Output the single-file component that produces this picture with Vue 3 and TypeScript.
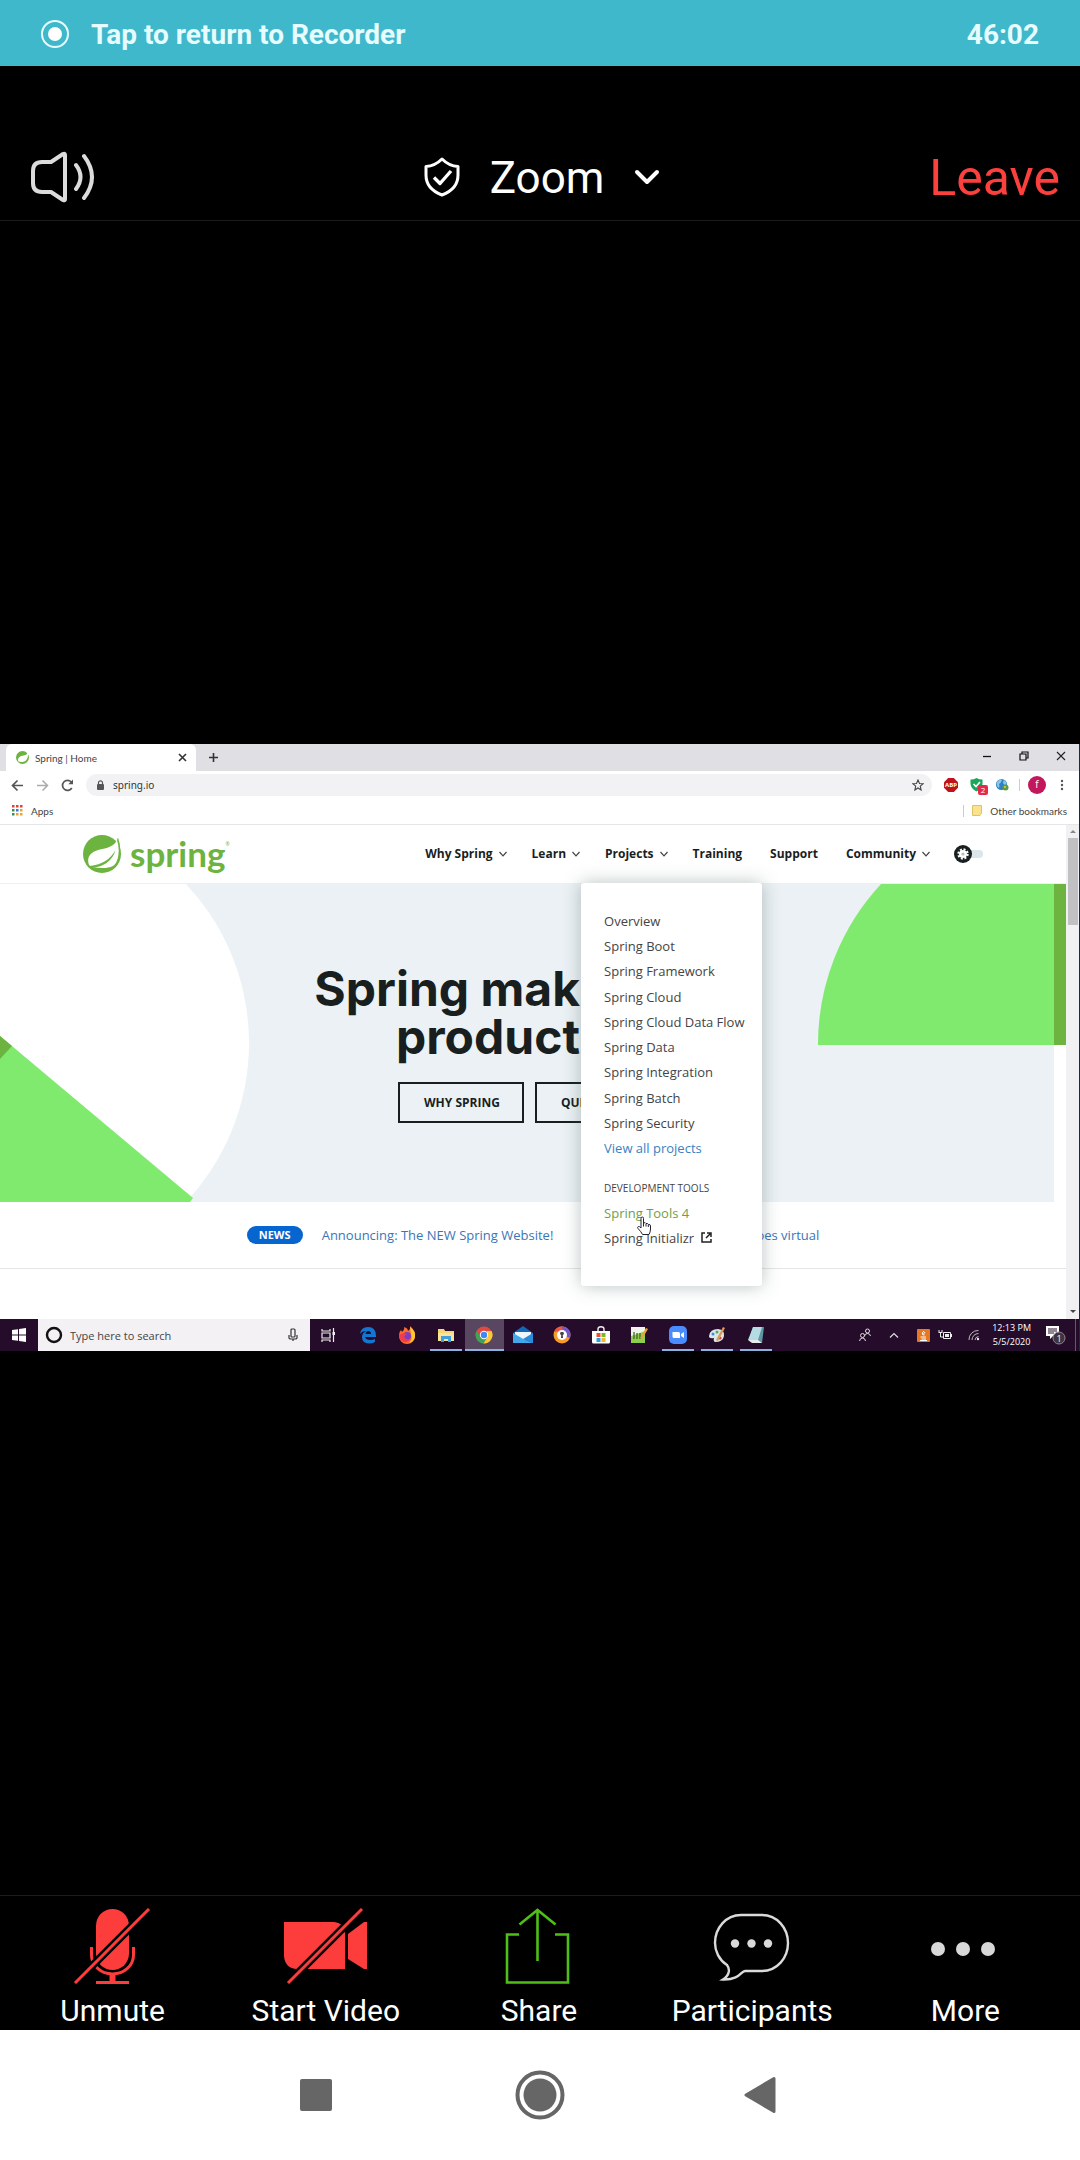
<script setup lang="ts">
import { ref } from 'vue'

interface NavItem {
  label: string
  caret: boolean
  menu?: boolean
}

const navItems: NavItem[] = [
  { label: 'Why Spring', caret: true },
  { label: 'Learn', caret: true },
  { label: 'Projects', caret: true, menu: true },
  { label: 'Training', caret: false },
  { label: 'Support', caret: false },
  { label: 'Community', caret: true },
]

const projects: string[] = [
  'Overview',
  'Spring Boot',
  'Spring Framework',
  'Spring Cloud',
  'Spring Cloud Data Flow',
  'Spring Data',
  'Spring Integration',
  'Spring Batch',
  'Spring Security',
  'View all projects',
]

const address = ref('spring.io')
const appColors = ['#d9473a', '#d9473a', '#d9473a', '#3f8f54', '#3b78d8', '#e8a33a', '#3f8f54', '#e8a33a', '#e8a33a']
</script>

<template>
  <div class="phone">
    <button class="recorder" type="button">
      <svg class="rec-icon" viewBox="0 0 28 28"><circle cx="14" cy="14" r="13" fill="none" stroke="#e6fcff" stroke-width="2" /><circle cx="14" cy="14" r="7" fill="#fff" /></svg>
      <span>Tap to return to Recorder</span>
      <span class="rec-time">46:02</span>
    </button>

    <header class="meeting-head">
      <button type="button" class="plain speaker" aria-label="Speaker">
        <svg width="66" height="52" viewBox="0 0 66 52" fill="none" stroke="#dcdcdc" stroke-width="4" stroke-linecap="round" stroke-linejoin="round">
          <path d="M3 20Q3 11 12 11H21L33 3Q35 2 35 4V48Q35 50 33 49L21 41H12Q3 41 3 32Z" />
          <path d="M46 14Q55 26 46 38M54 5Q70 26 54 47" />
        </svg>
      </button>
      <button type="button" class="plain title">
        <svg width="36" height="40" viewBox="0 0 36 40" fill="none" stroke="#fff" stroke-width="3" stroke-linejoin="round"><path d="M18 2Q25 9 34 9.500V18Q34 32 18 38Q2 32 2 18V9.500Q11 9 18 2Z" /><path d="M10 20.500L16 26.500L27 14" stroke-width="3.400" /></svg>
        <span>Zoom</span>
        <svg width="26" height="16" viewBox="0 0 26 16" fill="none" stroke="#fff" stroke-width="4" stroke-linecap="round" stroke-linejoin="round"><path d="M3 3L13 13L23 3" /></svg>
      </button>
      <button type="button" class="plain leave">Leave</button>
    </header>

    <main class="stage">
      <section class="share">
        <div class="tabstrip">
          <div class="tab">
            <svg width="13" height="13" viewBox="0 0 38 38"><circle cx="19" cy="19" r="19" fill="#6db33f" /><path d="M35 3C33 10 28 13 19 14C8 16 4 23 7 31C20 35 38 32 35 3Z" fill="#fff" /></svg>
            <span>Spring | Home</span>
            <svg class="tab-x" width="9" height="9" viewBox="0 0 9 9" stroke="#333" stroke-width="1.600"><path d="M1 1L8 8M8 1L1 8" /></svg>
          </div>
          <svg class="newtab" width="11" height="11" viewBox="0 0 11 11" stroke="#333" stroke-width="1.600"><path d="M5.500 1V10M1 5.500H10" /></svg>
          <div class="wincontrols">
            <svg width="10" height="10" viewBox="0 0 10 10" stroke="#111" stroke-width="1.300"><path d="M1 5.500H9" /></svg>
            <svg width="10" height="10" viewBox="0 0 10 10" fill="none" stroke="#111" stroke-width="1.200"><path d="M1 3H7V9H1ZM3 3V1H9V7H7" /></svg>
            <svg width="10" height="10" viewBox="0 0 10 10" stroke="#222" stroke-width="1.100"><path d="M1 1L9 9M9 1L1 9" /></svg>
          </div>
        </div>

        <div class="toolbar">
          <svg width="13" height="13" viewBox="0 0 13 13" fill="none" stroke="#555" stroke-width="1.700"><path d="M12 6.500H2M6.500 1.500L1.500 6.500L6.500 11.500" /></svg>
          <svg width="13" height="13" viewBox="0 0 13 13" fill="none" stroke="#aaa" stroke-width="1.500"><path d="M1 6.500H11M6.500 1.500L11.500 6.500L6.500 11.500" /></svg>
          <svg width="13" height="13" viewBox="0 0 13 13" fill="none" stroke="#555" stroke-width="1.700"><path d="M10.800 9A5 5 0 1 1 10.200 3L11 4" /><path d="M12 .500V5.300H7.300Z" fill="#555" stroke="none" /></svg>
          <label class="omnibox">
            <svg width="9" height="10" viewBox="0 0 9 10"><rect x="1" y="4" width="7" height="6" rx="1" fill="#555" /><path d="M2.500 4V2.800A2 2 0 0 1 6.500 2.800V4" fill="none" stroke="#555" stroke-width="1.200" /></svg>
            <input v-model="address" type="text" aria-label="Address" />
            <svg width="12" height="12" viewBox="0 0 12 12" fill="none" stroke="#444" stroke-width="1.100"><path d="M6 1L7.500 4.500L11 4.800L8.300 7.200L9.100 11L6 9L2.900 11L3.700 7.200L1 4.800L4.500 4.500Z" /></svg>
          </label>
          <div class="extensions">
            <span class="abp">ABP</span>
            <span class="guard">
              <svg width="13" height="14" viewBox="0 0 13 14"><path d="M6.500 0Q9 1.500 12.500 1.500V6Q12 11 6.500 13.500Q1 11 .500 6V1.500Q4 1.500 6.500 0Z" fill="#1ba75a" /><path d="M3.500 6L6 8.500L10 4" fill="none" stroke="#fff" stroke-width="1.600" /></svg>
              <i>2</i>
            </span>
            <svg width="14" height="14" viewBox="0 0 14 14"><circle cx="6.500" cy="6.500" r="5.500" fill="#2c82c4" /><path d="M2 4Q5 0 7 2Q6 5 4 6Q5 8 4 10Q1 8 2 4ZM9 2Q12 4 11 7Q8 7 8 4Z" fill="#8bc6e8" /><circle cx="10.500" cy="9.500" r="3" fill="#5d9c3c" /><circle cx="10" cy="9" r="1" fill="#f1c946" /></svg>
            <span class="vline"></span>
            <span class="avatar">f</span>
            <svg width="4" height="14" viewBox="0 0 4 14" fill="#555"><circle cx="2" cy="3" r="1.200" /><circle cx="2" cy="7" r="1.200" /><circle cx="2" cy="11" r="1.200" /></svg>
          </div>
        </div>

        <div class="bookmarks">
          <svg width="11" height="11" viewBox="0 0 11 11"><rect v-for="(c, i) in appColors" :key="i" :x="(i % 3) * 4" :y="Math.floor(i / 3) * 4" width="2.500" height="2.500" :fill="c" /></svg>
          <span>Apps</span>
          <span class="vline push"></span>
          <svg width="10" height="11" viewBox="0 0 10 11"><path d="M.500 .500H9.500V8L8 10.500H.500Z" fill="#fbe38e" stroke="#e0c266" /></svg>
          <span>Other bookmarks</span>
        </div>

        <div class="viewport">
          <div class="page">
            <header class="site-head">
              <a class="brand" href="#" aria-label="spring home">
                <svg width="38" height="38" viewBox="0 0 38 38">
                  <circle cx="19" cy="19" r="19" fill="#6db33f" />
                  <path d="M34.500 4C32 10 27 12.500 19 14C8 16 3 22 6 30L9 32C16 33 24 34 30 31C37 26 38.500 14 34.500 4Z" fill="#fff" />
                  <path d="M35 2.500Q40.500 18 33 29Q38 17 34 5Z" fill="#6db33f" />
                  <path d="M7 31Q25 29 32.500 15Q28 31 8 33Z" fill="#6db33f" />
                </svg>
                <span class="wordmark">spring</span><sup>®</sup>
              </a>
              <nav>
                <ul class="nav">
                  <li v-for="item in navItems" :key="item.label" :class="{ flat: !item.caret }">
                    <a href="#">{{ item.label }}</a>
                    <svg v-if="item.caret" width="8" height="6" viewBox="0 0 8 6" fill="none" stroke="#444" stroke-width="1.200"><path d="M.500 1L4 4.800L7.500 1" /></svg>
                    <div v-if="item.menu" class="dropdown">
                      <ul class="projects">
                        <li v-for="p in projects" :key="p"><a href="#" :class="{ all: p === 'View all projects' }">{{ p }}</a></li>
                      </ul>
                      <h2>DEVELOPMENT TOOLS</h2>
                      <ul class="tools">
                        <li><a href="#" class="hovered">Spring Tools 4</a></li>
                        <li>
                          <a href="#">Spring Initializr</a>
                          <svg width="11" height="11" viewBox="0 0 11 11" fill="none" stroke="#222" stroke-width="1.500"><path d="M4 1H1V10H10V7M6 1H10V5M10 1L5 6" /></svg>
                        </li>
                      </ul>
                      <svg class="hand" width="16" height="20" viewBox="0 0 16 20"><path d="M5 11V2.500Q5 1 6.300 1T7.500 2.500V7Q9.500 6 10 7.500Q12 7 12.300 8.500Q14.500 8 14.500 10V13Q14.500 16 13 18.500H6.500Q5 15.500 2 12.500Q1 11 2.300 10.500Q3.500 10 5 12Z" fill="#fff" stroke="#223" /><path d="M7.500 7V10.500M10 8V10.500M12.300 9V11" stroke="#223" fill="none" /></svg>
                    </div>
                  </li>
                </ul>
              </nav>
              <button type="button" class="plain theme" aria-label="Theme">
                <svg width="30" height="18" viewBox="0 0 30 18"><rect x="10" y="5" width="19" height="8" rx="4" fill="#dbe6ea" /><circle cx="9" cy="9" r="9" fill="#191e1e" /><circle cx="9" cy="9" r="4" fill="#fff" /><circle cx="9" cy="9" r="4.700" fill="none" stroke="#fff" stroke-width="2" stroke-dasharray="2 1.690" /><circle cx="9" cy="9" r="1.600" fill="#bbb" /></svg>
              </button>
            </header>

            <section class="hero">
              <svg class="art-left" width="250" height="318" viewBox="0 0 250 318">
                <circle cx="17" cy="159" r="232" fill="#fff" />
                <path d="M0 152L193 314L190 318H0Z" fill="#80ea6e" />
                <path d="M0 152L12 162L0 175Z" fill="#6db33f" />
              </svg>
              <svg class="art-right" width="249" height="318" viewBox="0 0 249 318">
                <rect x="237" width="12" height="318" fill="#fff" />
                <path d="M64 0A236 236 0 0 0 1 161H237V0Z" fill="#80ea6e" />
                <rect x="237" width="12" height="161" fill="#6db33f" />
              </svg>
              <div class="pitch">
                <h1>Spring mak<br />product</h1>
                <div class="cta">
                  <button type="button">WHY SPRING</button>
                  <button type="button" class="wide-btn">QUI</button>
                </div>
              </div>
            </section>

            <section class="news">
              <span class="badge">NEWS</span>
              <a href="#">Announcing: The NEW Spring Website!</a>
              <a class="last" href="#">oes virtual</a>
            </section>
            <div class="rest"></div>
          </div>
          <div class="scrollbar">
            <svg width="12" height="13" viewBox="0 0 12 13"><path d="M3 8H9L6 5Z" fill="#888" /></svg>
            <span class="thumb"></span>
            <svg class="down" width="12" height="13" viewBox="0 0 12 13"><path d="M3 4H9L6 7Z" fill="#444" /></svg>
          </div>
        </div>

        <div class="taskbar">
          <span class="start"><svg width="14" height="14" viewBox="0 0 14 14" fill="#fff"><path d="M0 2L6 1.200V6.500H0ZM7 1L14 0V6.500H7ZM0 7.500H6V12.800L0 12ZM7 7.500H14V14L7 13Z" /></svg></span>
          <label class="search">
            <svg width="18" height="18" viewBox="0 0 18 18"><circle cx="9" cy="9" r="7" fill="none" stroke="#111" stroke-width="2.400" /></svg>
            <input type="text" placeholder="Type here to search" aria-label="Search" />
            <svg width="10" height="14" viewBox="0 0 10 14" fill="none" stroke="#333" stroke-width="1.200"><rect x="3" y="1" width="4" height="8" rx="1" /><path d="M1 7V10Q1 11 3 11H7Q9 11 9 10V7M5 11V13" /></svg>
          </label>
          <div class="apps">
            <span><svg viewBox="0 0 18 18" fill="none" stroke="#eee" stroke-width="1.200"><path d="M2 3V5H10V3M2 7H10V12H2ZM2 16V14H10V16M13.500 2V16" /><path d="M12.500 6H15V9H12.500Z" fill="#eee" stroke="none" /></svg></span>
            <span><svg viewBox="0 0 18 18"><path d="M1 8Q2 1 9 1Q17 1 17 10V11H6Q7 14 11 14Q14 14 16 13V16Q13 17.500 10 17.500Q3 17 3 11Q3 7 7 5Q3 5 1 8ZM6.500 8H12Q12 5 9.500 5Q7 5 6.500 8Z" fill="#1277d3" fill-rule="evenodd" /></svg></span>
            <span><svg viewBox="0 0 18 18"><path d="M1 9Q1 6 3 4L4 6Q7 3 6 1Q10 2 10 5L12 3L12 0Q17 4 17 10A8 8 0 0 1 1 10Z" fill="#ff6a2b" /><path d="M12 1Q18 5 17 11Q16 16 11 17Q15 13 13 8Z" fill="#ffc62e" /><circle cx="9" cy="10" r="4" fill="#7a3fc0" /><path d="M1 9Q5 6 9 8Q7 9 6 11Q9 15 13 13Q8 19 3 14Q1 12 1 9Z" fill="#f23c4e" /></svg></span>
            <span class="open"><svg viewBox="0 0 18 18"><path d="M1 3H7L8 5H17V15H1Z" fill="#f7d675" /><path d="M1 7H17V15H1Z" fill="#fbe49a" /><path d="M4 16V10H14V16H11V13H7V16Z" fill="#3ea0dc" /></svg></span>
            <span class="open active"><svg viewBox="0 0 18 18"><circle cx="9" cy="9" r="8.500" fill="#e04a3d" /><path d="M1.600 5A8.500 8.500 0 0 0 8.500 17.500L12.500 11L9 9L5.500 11Z" fill="#3da457" /><path d="M16.500 5A8.500 8.500 0 0 1 8.500 17.500L12.500 11L12 5Z" fill="#fbc934" /><circle cx="9" cy="9" r="4.200" fill="#fff" /><circle cx="9" cy="9" r="3.200" fill="#4285f4" /></svg></span>
            <span><svg class="wide" viewBox="0 0 20 18"><path d="M0 7L10 0L20 7V17H0Z" fill="#1268b4" /><path d="M2 6H18V10L10 14L2 10Z" fill="#eef6fc" /><path d="M0 7L12 14L20 17H0Z" fill="#41a8ea" /><path d="M20 7L10 13L20 17Z" fill="#2b8bdb" /></svg></span>
            <span><svg viewBox="0 0 18 18"><circle cx="9" cy="9" r="8.500" fill="#f59c2a" /><path d="M9 .500A8.500 8.500 0 0 1 17 12L9 9Z" fill="#7357c9" /><path d="M1 6A8.500 8.500 0 0 1 9 .500L10 5Z" fill="#ef5443" /><circle cx="9" cy="9" r="5" fill="#fff" /><path d="M9 6A1.500 1.500 0 0 1 9.800 9L10 12H8L8.200 9A1.500 1.500 0 0 1 9 6Z" fill="#444" /></svg></span>
            <span><svg viewBox="0 0 18 18"><path d="M0 5H18V16Q18 17.500 16.500 17.500H1.500Q0 17.500 0 16Z" fill="#fff" /><path d="M6 5V3Q6 .800 9 .800T12 3V5" fill="none" stroke="#eee" stroke-width="1.400" /><path d="M4.500 7H8.500V11H4.500Z" fill="#e8502f" /><path d="M9.500 7H13.500V11H9.500Z" fill="#7ab52c" /><path d="M4.500 12H8.500V16H4.500Z" fill="#2c9fe0" /><path d="M9.500 12H13.500V16H9.500Z" fill="#f5b72c" /></svg></span>
            <span><svg viewBox="0 0 18 18"><path d="M1 1H15V17H1Z" fill="#f2f4ec" /><path d="M1 10Q8 8 15 5V17H1Z" fill="#8ed04c" /><path d="M4 13V6M7 13V7M10 13V7" stroke="#365b25" stroke-width="1.200" /><path d="M10 12L16 2L18 3L12 13Z" fill="#e9a23a" /></svg></span>
            <span class="open"><svg viewBox="0 0 18 18"><rect width="18" height="18" rx="5" fill="#4a8cff" /><path d="M3.500 6H9.500Q11 6 11 7.500V12H5Q3.500 12 3.500 10.500ZM12 8L15 6V12L12 10Z" fill="#fff" /></svg></span>
            <span class="open"><svg viewBox="0 0 18 18"><path d="M1 10Q2 3 10 3Q17 4 16 10Q15 16 7 16Q5 15 6 12Q1 13 1 10Z" fill="#dce6ea" /><circle cx="5" cy="8" r="1.500" fill="#3d8fd4" /><circle cx="9" cy="6" r="1.500" fill="#52ad4d" /><circle cx="12" cy="12" r="1.600" fill="#d9443b" /><path d="M8 14L15 1L17 2L10 15Z" fill="#d99b56" /></svg></span>
            <span class="open"><svg viewBox="0 0 18 18"><path d="M6 1H17L15 17L2 14Z" fill="#5f98a2" /><path d="M6 1H15L11 14H1Z" fill="#b5dce2" /><path d="M1 14H11L15 17H5Z" fill="#e5eceb" /></svg></span>
          </div>
          <div class="tray">
            <svg class="people" width="12" height="14" viewBox="0 0 12 14" fill="none" stroke="#ddd"><circle cx="8.500" cy="3" r="2" /><path d="M5.500 8Q6 5.500 8.500 5.500T11.500 8" /><circle cx="3.500" cy="7.500" r="2" /><path d="M.500 13Q1 10 3.500 10T6.500 13" /></svg>
            <svg width="10" height="7" viewBox="0 0 10 7" fill="none" stroke="#ddd" stroke-width="1.200"><path d="M1 5.500L5 1.500L9 5.500" /></svg>
            <svg class="java" width="13" height="13" viewBox="0 0 13 13"><rect width="13" height="13" rx="1" fill="#e87722" /><path d="M7 2Q4 4 6 6M8 3Q6 5 7 6.500M3.500 8H9M4.500 10H9M3 11.500H10" fill="none" stroke="#fff" /></svg>
            <svg width="14" height="10" viewBox="0 0 14 10" fill="none" stroke="#eee"><path d="M1 0V2M4 0V2M.500 2.500H4.500M2.500 3V7H5" /><path d="M5.500 2.500H12.500V8.500H5.500Z" /><path d="M7 5.500H11" stroke-width="3" /><path d="M13.500 4V7" /></svg>
            <svg width="12" height="12" viewBox="0 0 12 12" fill="none" stroke="#bbb"><path d="M1 11A9 9 0 0 1 10.500 1.500M4 11A6.500 6.500 0 0 1 10.500 4.500M7 11A4 4 0 0 1 10.500 7.500" /><circle cx="10" cy="10" r="1.200" fill="#eee" stroke="none" /></svg>
            <time><span>12:13 PM</span><span>5/5/2020</span></time>
            <svg class="notif" width="20" height="20" viewBox="0 0 20 20"><path d="M0 1H13V11H7L4 14V11H0Z" fill="#fff" /><path d="M2 4H11M2 6H11M2 8H8" stroke="#260c2b" /><circle cx="13" cy="13" r="6" fill="#3e3542" stroke="#8d8590" stroke-width="1" /><text x="13" y="16.500" font-size="9" text-anchor="middle" fill="#fff">1</text></svg>
          </div>
        </div>
      </section>
    </main>

    <nav class="controls">
      <button type="button" class="plain">
        <svg viewBox="0 0 84 76" fill="none">
          <rect x="25" y="1" width="33" height="61" rx="16.500" fill="#fd3c3c" />
          <path d="M20.500 39V47A21 19 0 0 0 62.500 47V39" stroke="#fd3c3c" stroke-width="3" />
          <path d="M41.500 66V73M25 74.500H58" stroke="#fd3c3c" stroke-width="3" />
          <path d="M41.500 66V74" stroke="#fd3c3c" stroke-width="6" />
          <path d="M16 63L78 1" stroke="#000" stroke-width="8" />
          <path d="M4 75L78 1" stroke="#fd3c3c" stroke-width="3" />
        </svg>
        <span>Unmute</span>
      </button>
      <button type="button" class="plain">
        <svg viewBox="0 0 84 76">
          <path d="M0 14H50Q61 15 61 26V61H12Q1 60 0 48ZM64 26L80 14H83V61H80L64 51Z" fill="#fd3c3c" />
          <path d="M4 75L78 1" stroke="#000" stroke-width="8" />
          <path d="M4 75L78 1" stroke="#fd3c3c" stroke-width="3" />
        </svg>
        <span>Start Video</span>
      </button>
      <button type="button" class="plain">
        <svg viewBox="0 0 84 76" fill="none" stroke="#4fbe17" stroke-width="2.600"><path d="M22 26.500H10V74.500H71V26.500H58M40.500 53V2M22.500 16.500L40.500 2L58.500 16.500" /></svg>
        <span>Share</span>
      </button>
      <button type="button" class="plain">
        <svg viewBox="0 0 84 76"><path d="M31 7H52C67 7 78 20 78 35S67 63 52 63H35C31 63 30 72 13 71.500C20 67 20 61 17 57C9 52 5 43 5 35C5 20 16 7 31 7Z" fill="none" stroke="#dadada" stroke-width="2.400" /><g fill="#dadada"><circle cx="25" cy="35.500" r="4.200" /><circle cx="41.500" cy="35.500" r="4.200" /><circle cx="58" cy="35.500" r="4.200" /></g></svg>
        <span>Participants</span>
      </button>
      <button type="button" class="plain">
        <svg viewBox="0 0 84 76" fill="#d8d8d8"><circle cx="15" cy="41" r="7" /><circle cx="40" cy="41" r="7" /><circle cx="65" cy="41" r="7" /></svg>
        <span>More</span>
      </button>
    </nav>

    <nav class="system">
      <button type="button" class="plain" aria-label="Recent apps"><svg viewBox="0 0 50 50"><rect x="9" y="9" width="32" height="32" rx="2" fill="#666" /></svg></button>
      <button type="button" class="plain" aria-label="Home"><svg viewBox="0 0 50 50"><circle cx="25" cy="25" r="22.500" fill="none" stroke="#666" stroke-width="4" /><circle cx="25" cy="25" r="16.500" fill="#666" /></svg></button>
      <button type="button" class="plain" aria-label="Back"><svg viewBox="0 0 50 50"><path d="M7 25L35 8.500V41.500Z" fill="#666" stroke="#666" stroke-width="3" stroke-linejoin="round" /></svg></button>
    </nav>
  </div>
</template>

<style>
body {
  margin: 0;
  background: #000;
}
</style>

<style scoped>
* {
  box-sizing: border-box;
}
svg {
  display: block;
  flex: none;
}
ul {
  list-style: none;
  margin: 0;
  padding: 0;
}
a {
  color: inherit;
  text-decoration: none;
}
button,
input {
  font-family: inherit;
}
.plain {
  background: none;
  border: 0;
  padding: 0;
  color: inherit;
}
.phone {
  min-height: 100vh;
  display: flex;
  flex-direction: column;
  background: #000;
  color: #fff;
  font-family: Roboto, sans-serif;
}
.recorder {
  display: flex;
  align-items: center;
  height: 66px;
  padding: 2px 41px 0 41px;
  border: 0;
  background: #3fb8cb;
  color: #e6fcff;
  font-size: 28px;
  font-weight: 700;
}
.rec-icon {
  width: 28px;
  height: 28px;
  margin-right: 22px;
}
.rec-time {
  margin-left: auto;
}
.meeting-head {
  display: grid;
  grid-template-columns: 1fr auto 1fr;
  align-items: center;
  height: 155px;
  padding: 80px 20px 12px 24px;
  border-bottom: 1px solid #1c1c1c;
}
.speaker {
  justify-self: start;
  margin-left: 6px;
}
.title {
  display: flex;
  align-items: center;
  gap: 30px;
  font-size: 44px;
}
.title span,
.leave {
  padding-top: 2px;
}
.leave {
  justify-self: end;
  color: #fb403e;
  font-size: 50px;
  line-height: 60px;
}
.stage {
  flex: 1;
  display: flex;
  align-items: center;
  padding-bottom: 21px;
}

/* shared desktop */
.share {
  flex: 1;
  min-width: 0;
  background: #fff;
  color: #444;
  border-right: 1px solid #1c2b3b;
  font-family: 'Open Sans', sans-serif;
  font-size: 11px;
}
.tabstrip {
  display: flex;
  align-items: center;
  height: 27px;
  padding-left: 6px;
  background: #dfdfe4;
}
.tab {
  display: flex;
  align-items: center;
  gap: 6px;
  width: 190px;
  height: 27px;
  padding: 0 9px 0 10px;
  background: #fff;
  border-radius: 6px 6px 0 0;
  font-family: Lato, sans-serif;
  font-size: 10px;
}
.tab-x {
  margin-left: auto;
}
.newtab {
  margin-left: 12px;
}
.wincontrols {
  display: flex;
  gap: 27px;
  margin: 0 13px 4px auto;
}
.toolbar {
  display: flex;
  align-items: center;
  gap: 12px;
  height: 28px;
  padding-left: 11px;
}
.omnibox {
  flex: 1;
  display: flex;
  align-items: center;
  gap: 8px;
  height: 22px;
  padding: 0 8px 0 10px;
  border-radius: 11px;
  background: #f2f2f5;
}
.omnibox input {
  flex: 1;
  min-width: 0;
  padding: 0;
  border: 0;
  background: none;
  color: #333;
  font-family: 'Noto Sans', sans-serif;
  font-size: 10px;
}
.extensions {
  display: flex;
  align-items: center;
  gap: 12px;
  padding-right: 15px;
}
.abp {
  width: 14px;
  height: 14px;
  clip-path: polygon(30% 0, 70% 0, 100% 30%, 100% 70%, 70% 100%, 30% 100%, 0 70%, 0 30%);
  background: #c0121a;
  color: #fff;
  font-size: 6px;
  font-weight: 700;
  line-height: 14px;
  text-align: center;
}
.guard {
  position: relative;
}
.guard i {
  position: absolute;
  left: 8px;
  top: 7px;
  width: 10px;
  height: 10px;
  border-radius: 2px;
  background: #e5294c;
  color: #fff;
  font-size: 8px;
  font-style: normal;
  line-height: 10px;
  text-align: center;
}
.vline {
  width: 1px;
  height: 12px;
  background: #ccc;
}
.extensions .vline {
  margin: 0 -4px 0 -2px;
}
.avatar {
  width: 18px;
  height: 18px;
  border-radius: 50%;
  background: #c2185b;
  color: #fff;
  font-size: 10px;
  line-height: 17px;
  text-align: center;
}
.extensions .avatar + svg {
  margin-left: 2px;
}
.bookmarks {
  display: flex;
  align-items: center;
  gap: 8px;
  height: 26px;
  padding: 0 12px 2px 12px;
  border-bottom: 1px solid #e6e6e8;
  font-family: Lato, sans-serif;
  font-size: 10px;
}
.push {
  margin-left: auto;
}
.viewport {
  display: flex;
}
.page {
  flex: 1;
  min-width: 0;
}
.scrollbar {
  display: flex;
  flex-direction: column;
  align-items: center;
  width: 13px;
  background: #f1f1f3;
}
.thumb {
  width: 10px;
  height: 87px;
  background: #c1c1c3;
}
.down {
  margin-top: auto;
}
.site-head {
  display: flex;
  align-items: center;
  height: 59px;
  padding: 0 82px 0 83px;
  border-bottom: 1px solid #edeff0;
}
.brand {
  display: flex;
  align-items: center;
  color: #6db33f;
}
.wordmark {
  margin-left: 9px;
  padding-bottom: 2px;
  font-family: Lato, sans-serif;
  font-size: 35px;
  font-weight: 700;
  line-height: 38px;
}
.brand sup {
  align-self: flex-start;
  font-size: 5px;
  line-height: 20px;
}
.site-head nav {
  margin-left: auto;
}
.nav {
  display: flex;
  gap: 25px;
}
.nav > li {
  position: relative;
  display: flex;
  align-items: center;
  gap: 6px;
  color: #191e1e;
  font-size: 12px;
  font-weight: 700;
  line-height: 20px;
}
.nav > .flat {
  margin-right: 3px;
}
.theme {
  margin-left: 24px;
}
.dropdown {
  position: absolute;
  z-index: 2;
  left: -24px;
  top: 39px;
  width: 181px;
  height: 403px;
  padding: 25px 0 0 23px;
  border-radius: 3px;
  background: #fff;
  box-shadow: 0 0 18px rgba(60, 80, 80, 0.35);
  color: #444;
  font-size: 13px;
  font-weight: 400;
}
.projects {
  display: grid;
  grid-auto-rows: 1fr;
  height: 253px;
  align-items: center;
}
.all {
  color: #3a7fc4;
}
.dropdown h2 {
  margin: 17px 0 2px;
  font-size: 10px;
  font-weight: 400;
  line-height: 20px;
}
.tools li {
  display: flex;
  align-items: center;
  gap: 7px;
  height: 25px;
}
.hovered {
  color: #6d9f4b;
}
.hand {
  position: absolute;
  left: 55px;
  top: 333px;
}
.hero {
  position: relative;
  display: flex;
  justify-content: center;
  height: 318px;
  background: #ebf1f4;
  color: #191e1e;
}
.art-left,
.art-right {
  position: absolute;
  top: 0;
}
.art-left {
  left: 0;
}
.art-right {
  right: 0;
}
.pitch {
  position: relative;
  width: 438px;
}
.hero h1 {
  width: 266px;
  margin: 0;
  padding-top: 81px;
  font-family: Inter, sans-serif;
  font-size: 48px;
  font-weight: 700;
  line-height: 48px;
  text-align: right;
  white-space: nowrap;
}
.cta {
  display: flex;
  justify-content: center;
  gap: 11px;
  margin-top: 21px;
}
.cta button {
  width: 126px;
  height: 41px;
  padding: 0 24px;
  border: 2px solid #191e1e;
  background: none;
  color: #191e1e;
  font-size: 12px;
  font-weight: 700;
  text-align: left;
  white-space: nowrap;
}
.cta .wide-btn {
  width: 133px;
}
.news {
  display: flex;
  align-items: center;
  justify-content: center;
  height: 67px;
  border-bottom: 1px solid #e4e6e8;
  color: #3a76b5;
  font-size: 13px;
}
.badge {
  width: 56px;
  margin-right: 19px;
  border-radius: 9px;
  background: #0765d0;
  color: #fff;
  font-size: 11px;
  font-weight: 700;
  line-height: 18px;
  text-align: center;
}
.last {
  width: 266px;
  text-align: right;
}
.rest {
  height: 50px;
}

/* desktop taskbar */
.taskbar {
  display: flex;
  height: 32px;
  background: #260c2b;
  color: #fff;
}
.start {
  display: grid;
  place-items: center;
  width: 38px;
}
.search {
  display: flex;
  align-items: center;
  gap: 7px;
  width: 272px;
  padding: 0 12px 0 7px;
  background: #f3f1f4;
}
.search input {
  flex: 1;
  min-width: 0;
  padding: 0;
  border: 0;
  background: none;
  font-size: 11px;
}
.search input::placeholder {
  color: #444;
  opacity: 1;
}
.apps {
  display: grid;
  grid-template-columns: repeat(12, 1fr);
  width: 465px;
}
.apps span {
  display: grid;
  place-items: center;
}
.apps svg {
  width: 18px;
  height: 18px;
}
.apps .wide {
  width: 20px;
}
.open {
  background: linear-gradient(#86b3e2, #86b3e2) bottom / 32px 2px no-repeat;
}
.active {
  background: #594661;
  border-bottom: 2px solid #86b3e2;
  padding-top: 2px;
}
.tray {
  display: flex;
  align-items: center;
  gap: 16px;
  margin-left: auto;
  margin-right: 3px;
  padding-right: 9px;
  border-right: 1px solid #6b5570;
}
.people {
  margin-right: 2px;
}
.java {
  margin: 0 -8px 0 2px;
}
.tray time {
  display: flex;
  flex-direction: column;
  margin: 0 -1px 0 -4px;
  font-size: 9px;
  line-height: 14px;
  text-align: center;
}

/* meeting controls */
.controls {
  display: grid;
  grid-template-columns: repeat(5, 1fr);
  padding: 12px 8px 0 6px;
  border-top: 1px solid #1c1c1c;
}
.controls button {
  display: flex;
  flex-direction: column;
  align-items: center;
  gap: 8px;
  font-size: 30px;
  line-height: 38px;
}
.controls svg {
  width: 84px;
  height: 76px;
}
.system {
  display: flex;
  justify-content: center;
  align-items: center;
  gap: 174px;
  height: 130px;
  background: #fff;
}
.system svg {
  width: 50px;
  height: 50px;
}
</style>
